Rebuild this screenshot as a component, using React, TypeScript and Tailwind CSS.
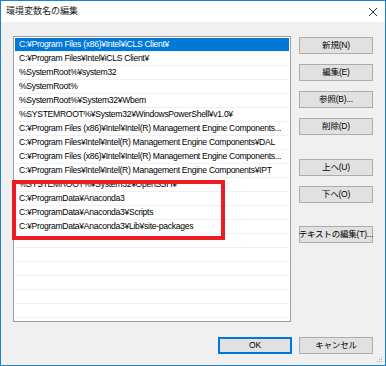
import { useState } from "react";

const PATHS = [
  "C:¥Program Files (x86)¥Intel¥iCLS Client¥",
  "C:¥Program Files¥Intel¥iCLS Client¥",
  "%SystemRoot%¥system32",
  "%SystemRoot%",
  "%SystemRoot%¥System32¥Wbem",
  "%SYSTEMROOT%¥System32¥WindowsPowerShell¥v1.0¥",
  "C:¥Program Files (x86)¥Intel¥Intel(R) Management Engine Components...",
  "C:¥Program Files¥Intel¥Intel(R) Management Engine Components¥DAL",
  "C:¥Program Files (x86)¥Intel¥Intel(R) Management Engine Components...",
  "C:¥Program Files¥Intel¥Intel(R) Management Engine Components¥IPT",
  "%SYSTEMROOT%¥System32¥OpenSSH¥",
  "C:¥ProgramData¥Anaconda3",
  "C:¥ProgramData¥Anaconda3¥Scripts",
  "C:¥ProgramData¥Anaconda3¥Lib¥site-packages",
];

const EMPTY_ROWS = 7;

function WinButton({ label, primary = false }: { label: string; primary?: boolean }) {
  return (
    <button
      className={[
        "flex h-[17px] w-[74px] items-center justify-center whitespace-nowrap bg-[#e1e1e1] text-[8.5px] leading-none tracking-[-0.2px] text-black",
        primary ? "border-2 border-[#0078d7]" : "border border-[#adadad]",
      ].join(" ")}
    >
      {label}
    </button>
  );
}

export default function App() {
  const [selected, setSelected] = useState(0);

  return (
    <div
      className="relative flex h-[366px] w-[386px] flex-col border border-[#1883d7] bg-[#f0f0f0] text-black"
      style={{ fontFamily: '"Liberation Sans", "Noto Sans CJK JP", sans-serif' }}
    >
      {/* title bar */}
      <div className="flex h-[21px] items-center justify-between bg-white pl-[5px] pr-[6px]">
        <span className="text-[9px] text-[#222]">環境変数名の編集</span>
        <svg width="10" height="10" viewBox="0 0 10 10" className="mr-[1px]">
          <path d="M1 1 L9 9 M9 1 L1 9" stroke="#333" strokeWidth="1" />
        </svg>
      </div>

      <div className="flex flex-1 flex-col px-[12px] pt-[14px]">
        <div className="flex gap-[8px]">
          {/* list */}
          <div className="h-[286px] w-[289px] overflow-hidden border border-[#a0a0a0] bg-white p-[1px]">
            {PATHS.map((p, i) => (
              <div
                key={i}
                onClick={() => setSelected(i)}
                className={[
                  "flex h-[14px] items-center overflow-hidden whitespace-nowrap border-b border-[#f0f0f0] pl-[4px] text-[8.6px] leading-none tracking-[-0.3px]",
                  i === selected ? "bg-[#0078d7] text-white" : "text-black",
                ].join(" ")}
              >
                {p}
              </div>
            ))}
            {Array.from({ length: EMPTY_ROWS }).map((_, i) => (
              <div key={`e${i}`} className="h-[14px] border-b border-[#f0f0f0]" />
            ))}
          </div>

          {/* side buttons */}
          <div className="flex flex-col pt-[1px]">
            <div className="flex flex-col gap-[10px]">
              <WinButton label="新規(N)" />
              <WinButton label="編集(E)" />
              <WinButton label="参照(B)..." />
              <WinButton label="削除(D)" />
            </div>
            <div className="mt-[24px] flex flex-col gap-[10px]">
              <WinButton label="上へ(U)" />
              <WinButton label="下へ(O)" />
            </div>
            <div className="mt-[23px]">
              <WinButton label="テキストの編集(T)..." />
            </div>
          </div>
        </div>

        <div className="mt-[15px] flex justify-end gap-[7px]">
          <WinButton label="OK" primary />
          <WinButton label="キャンセル" />
        </div>
      </div>

      {/* annotation */}
      <div className="absolute left-[11px] top-[179px] h-[60px] w-[213px] border-[4px] border-[#ea1c24]" />

      {/* resize grip */}
      <svg width="6" height="6" viewBox="0 0 6 6" className="absolute bottom-[2px] right-[2px]">
        <rect x="4" y="0" width="1" height="1" fill="#b0b0b0" />
        <rect x="2" y="2" width="1" height="1" fill="#b0b0b0" />
        <rect x="4" y="2" width="1" height="1" fill="#b0b0b0" />
        <rect x="0" y="4" width="1" height="1" fill="#b0b0b0" />
        <rect x="2" y="4" width="1" height="1" fill="#b0b0b0" />
        <rect x="4" y="4" width="1" height="1" fill="#b0b0b0" />
      </svg>
    </div>
  );
}
